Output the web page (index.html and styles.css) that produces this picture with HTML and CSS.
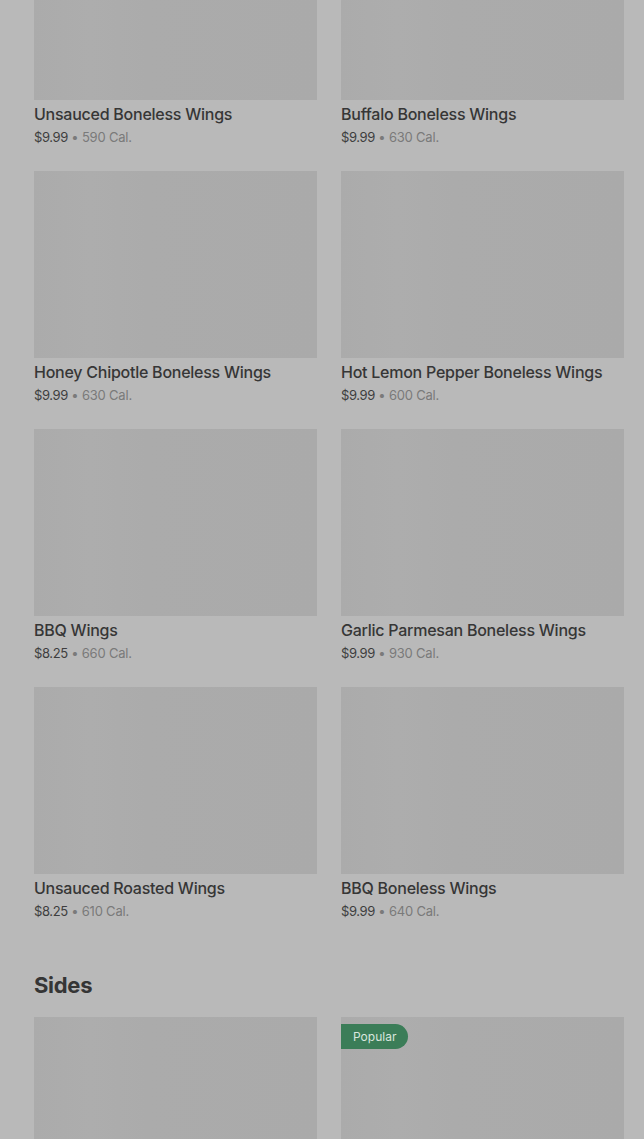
FILE: index.html
```html
<!DOCTYPE html>
<html lang="en">
<head>
    <meta charset="UTF-8">
    <meta name="viewport" content="width=device-width, initial-scale=1.0">
    <title>Menu</title>
    <link rel="stylesheet" href="styles.css">
</head>
<body>
    <main class="menu">
        <section class="menu-section first">
            <div class="item-grid">
                <div class="item">
                    <div class="item-image"></div>
                    <h3 class="item-title">Unsauced Boneless Wings</h3>
                    <p class="item-meta"><span class="price">$9.99</span> • 590 Cal.</p>
                </div>
                <div class="item">
                    <div class="item-image"></div>
                    <h3 class="item-title">Buffalo Boneless Wings</h3>
                    <p class="item-meta"><span class="price">$9.99</span> • 630 Cal.</p>
                </div>
                <div class="item">
                    <div class="item-image"></div>
                    <h3 class="item-title">Honey Chipotle Boneless Wings</h3>
                    <p class="item-meta"><span class="price">$9.99</span> • 630 Cal.</p>
                </div>
                <div class="item">
                    <div class="item-image"></div>
                    <h3 class="item-title">Hot Lemon Pepper Boneless Wings</h3>
                    <p class="item-meta"><span class="price">$9.99</span> • 600 Cal.</p>
                </div>
                <div class="item">
                    <div class="item-image"></div>
                    <h3 class="item-title">BBQ Wings</h3>
                    <p class="item-meta"><span class="price">$8.25</span> • 660 Cal.</p>
                </div>
                <div class="item">
                    <div class="item-image"></div>
                    <h3 class="item-title">Garlic Parmesan Boneless Wings</h3>
                    <p class="item-meta"><span class="price">$9.99</span> • 930 Cal.</p>
                </div>
                <div class="item">
                    <div class="item-image"></div>
                    <h3 class="item-title">Unsauced Roasted Wings</h3>
                    <p class="item-meta"><span class="price">$8.25</span> • 610 Cal.</p>
                </div>
                <div class="item">
                    <div class="item-image"></div>
                    <h3 class="item-title">BBQ Boneless Wings</h3>
                    <p class="item-meta"><span class="price">$9.99</span> • 640 Cal.</p>
                </div>
            </div>
        </section>

        <section class="menu-section">
            <h2 class="section-title">Sides</h2>
            <div class="item-grid">
                <div class="item">
                    <div class="item-image"></div>
                </div>
                <div class="item">
                    <div class="item-image">
                        <span class="badge">Popular</span>
                    </div>
                </div>
            </div>
        </section>
    </main>
</body>
</html>
```

FILE: styles.css
```css
/* Reset */
* {
    margin: 0;
    padding: 0;
    box-sizing: border-box;
}

body {
    font-family: 'Inter', 'Liberation Sans', sans-serif;
    background-color: #b9b9b9; /* dimmed page behind overlay */
    color: #333333;
    overflow: hidden;
    height: 1139px;
}

.menu {
    padding: 0 20px 0 34px;
    margin-top: -87px; /* page is scrolled */
}

.menu-section.first {
    margin-bottom: 31px;
}

.section-title {
    font-size: 22px;
    font-weight: 700;
    letter-spacing: -0.3px;
    color: #353535;
    line-height: 28px;
    margin-bottom: 18px;
    padding-top: 20px;
}

.item-grid {
    display: grid;
    grid-template-columns: 283px 283px;
    column-gap: 24px;
    row-gap: 25px;
}

.item-image {
    position: relative;
    height: 187px;
    background: linear-gradient(90deg, #ababab 0%, #adadad 20%, #ababab 40%, #aaaaaa 100%);
}

.item-title {
    font-size: 16px;
    font-weight: 500;
    line-height: 20px;
    letter-spacing: -0.25px;
    color: #363636;
    margin-top: 4px;
}

.item-meta {
    font-size: 13px;
    line-height: 18px;
    letter-spacing: -0.2px;
    color: #7a7a7a;
    margin-top: 4px;
}

.price {
    color: #3e3e3e;
    letter-spacing: -0.4px;
}

.badge {
    position: absolute;
    top: 7px;
    left: 0;
    height: 25px;
    padding: 0 12px;
    display: flex;
    align-items: center;
    font-size: 12px;
    color: #d9e6de;
    background-color: #3b7d58;
    border-radius: 0 13px 13px 0;
}
```
